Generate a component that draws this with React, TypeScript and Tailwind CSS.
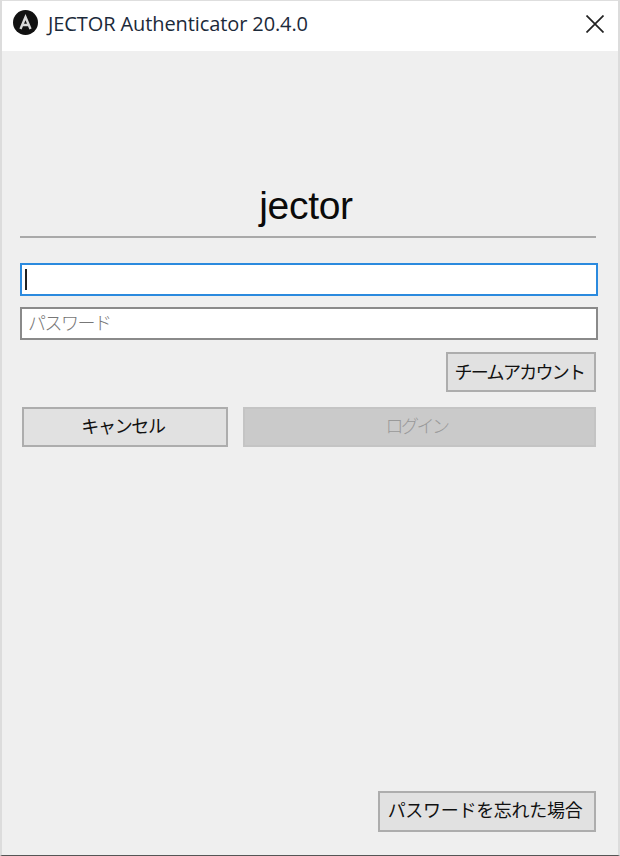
import React from "react";

const jp = { fontFamily: '"Noto Sans CJK JP", "Liberation Sans", sans-serif' };

function Btn({ children, className }: { children: React.ReactNode; className: string }) {
  return (
    <div style={jp} className={"flex items-center justify-center border-2 border-[#adadad] bg-[#e1e1e1] text-[18px] font-normal text-[#111] " + className}>
      {children}
    </div>
  );
}

export default function App() {
  return (
    <div className="w-[620px] h-[856px] flex flex-col bg-[#efefef] border-t border-t-[#dedede] border-l-2 border-l-[#dcdcdc] border-r-2 border-r-[#dcdcdc] border-b border-b-[#555] overflow-hidden">
      <div className="h-[50px] shrink-0 bg-white flex items-center pl-[11px] pr-[14px] pb-[7px]">
        <svg width="25" height="25" viewBox="0 0 25 25" className="shrink-0 -mt-[1px]">
          <circle cx="12.5" cy="12.5" r="12.5" fill="#111" />
          <path d="M7.5 19 L12.5 7 L17.5 19 M9.3 15 H15.7" stroke="#d8d8d8" strokeWidth="2.4" fill="none" />
        </svg>
        <span className="ml-[10px] text-[20px] text-[#1c2a3a] tracking-[-0.1px] mt-[2px]" style={{ fontFamily: '"Open Sans", sans-serif' }}>
          JECTOR Authenticator 20.4.0
        </span>
        <svg width="18" height="18" viewBox="0 0 18 18" className="ml-auto shrink-0 mt-[2px]">
          <path d="M0.5 0.5 L17.5 17.5 M17.5 0.5 L0.5 17.5" stroke="#222" strokeWidth="1.7" fill="none" />
        </svg>
      </div>

      <div className="flex-1 flex flex-col pl-[18px] pr-[22px] pt-[132px] pb-[23px]">
        <div className="text-center text-[39px] leading-[46px] text-[#0a0a0a] tracking-[-0.3px] h-[53px] pr-[4px]" style={{ fontFamily: '"Liberation Sans", sans-serif' }}>
          jector
        </div>
        <div className="h-[2px] bg-[#a9a9a9] w-[576px]" />

        <div className="mt-[25px] w-[578px] h-[33px] border-2 border-[#2b8ade] bg-white flex items-center pl-[3px]">
          <div className="w-[2px] h-[21px] bg-[#222]" />
        </div>
        <div className="mt-[11px] w-[578px] h-[33px] border-2 border-[#8a8a8a] bg-white flex items-center pl-[6px] pb-[3px] text-[18px] font-light text-[#777] tracking-[-1.5px]" style={jp}>
          パスワード
        </div>

        <div className="mt-3 flex justify-end w-[576px]">
          <Btn className="w-[150px] h-10 pb-[1px] pr-[3px] tracking-[-1.7px]">チームアカウント</Btn>
        </div>

        <div className="mt-[15px] flex w-[574px] ml-[2px] gap-[15px]">
          <Btn className="w-[206px] h-10 pb-[3px] pr-[4px] tracking-[-1.3px]">キャンセル</Btn>
          <div style={jp} className="flex-1 h-10 flex items-center justify-center pb-[3px] pr-[6px] border-2 border-[#c4c4c4] bg-[#cacaca] text-[18px] font-light text-[#999] tracking-[-2.5px]">
            ログイン
          </div>
        </div>

        <div className="mt-auto flex justify-end w-[576px]">
          <Btn className="w-[218px] h-[41px] pb-[5px] pr-[4px] tracking-[-0.3px]">パスワードを忘れた場合</Btn>
        </div>
      </div>
    </div>
  );
}
